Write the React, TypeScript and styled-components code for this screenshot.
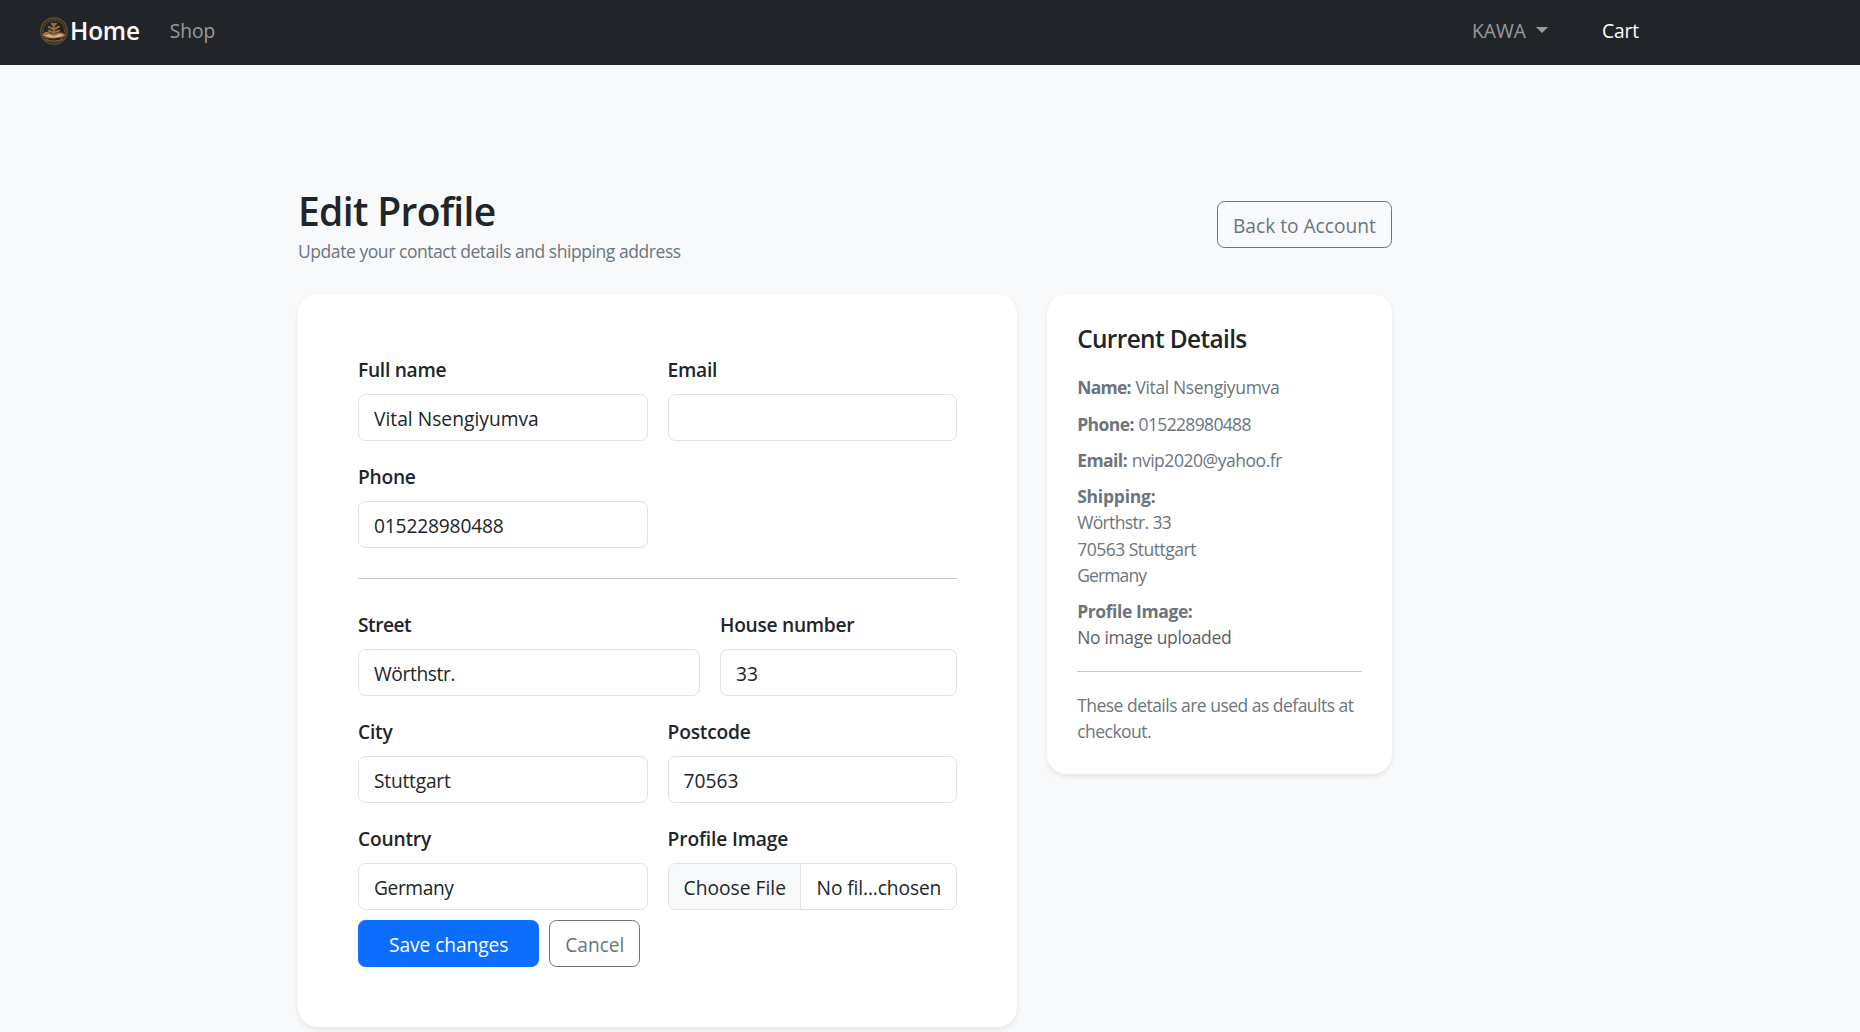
import React from "react";
import styled, { createGlobalStyle } from "styled-components";

const GlobalStyle = createGlobalStyle`
  *, *::before, *::after { box-sizing: border-box; }
  html, body { margin: 0; height: 1032px; overflow: hidden; }
  body {
    background: #f8f9fb;
    color: #212529;
    font-family: "Open Sans", "Noto Sans", sans-serif;
    font-size: 19.2px;
    line-height: 30px;
  }
`;

type Tracked = { $ls?: number };

const Navbar = styled.nav`
  display: flex;
  align-items: center;
  height: 65px;
  padding: 0 221px 3px 40px;
  background: #212529;
`;

const Brand = styled.a`
  display: flex;
  align-items: center;
  gap: 2px;
  color: #fff;
  font-size: 24.4px;
  font-weight: 600;
  letter-spacing: -0.2px;
`;

const NavLink = styled.a<Tracked & { $active?: boolean }>`
  display: flex;
  align-items: center;
  color: ${(p) => (p.$active ? "#fff" : "rgba(255, 255, 255, 0.55)")};
  letter-spacing: ${(p) => p.$ls ?? 0}px;
`;

const NavStart = styled.div`
  margin-left: 30px;
`;

const NavEnd = styled.div`
  display: flex;
  gap: 54px;
  margin-left: auto;
`;

const Caret = styled.span`
  margin-left: 10px;
  margin-top: -2px;
  border-top: 6px solid currentColor;
  border-left: 6px solid transparent;
  border-right: 6px solid transparent;
`;

const Page = styled.main`
  width: 1093.75px;
  margin: 121.5px 0 0 298px;
`;

const PageHeader = styled.header`
  display: flex;
  align-items: center;
  justify-content: space-between;
  margin-bottom: 31.25px;
`;

const Title = styled.h1`
  margin: 0 0 3px;
  font-size: 39px;
  font-weight: 600;
  line-height: 47px;
  letter-spacing: -0.65px;
`;

const Subtitle = styled.p`
  margin: 0;
  padding-top: 1px;
  margin-bottom: -1px;
  color: #6c757d;
  font-size: 17.5px;
  line-height: 26.25px;
  letter-spacing: -0.44px;
`;

const Button = styled.button<Tracked & { $primary?: boolean }>`
  height: 47px;
  padding: 2px ${(p) => (p.$primary ? 30 : 15)}px 0;
  border: 1px solid ${(p) => (p.$primary ? "#0d6efd" : "#6c757d")};
  border-radius: 7.5px;
  background: ${(p) => (p.$primary ? "#0d6efd" : "transparent")};
  color: ${(p) => (p.$primary ? "#fff" : "#6c757d")};
  font: inherit;
  white-space: nowrap;
  letter-spacing: ${(p) => p.$ls ?? 0}px;
`;

const Columns = styled.div`
  display: grid;
  grid-template-columns: 719.17px 344.58px;
  gap: 30px;
  align-items: start;
`;

const Card = styled.section<{ $pad: string }>`
  padding: ${(p) => p.$pad};
  border-radius: 20px;
  background: #fff;
  box-shadow: 0 2.5px 5px rgba(0, 0, 0, 0.075);
`;

const FieldRow = styled.div<{ $cols?: string }>`
  display: grid;
  grid-template-columns: ${(p) => p.$cols ?? "1fr 1fr"};
  gap: 20px;
  & + & { margin-top: 20px; }
`;

const Field = styled.div`
  min-width: 0;
`;

const Label = styled.label<Tracked>`
  display: block;
  padding-top: 1px;
  margin-bottom: 9px;
  font-weight: 600;
  letter-spacing: ${(p) => p.$ls ?? 0}px;
`;

const Input = styled.input<Tracked>`
  display: block;
  width: 100%;
  height: 47px;
  padding: 1px 15px 0;
  border: 1px solid #dee2e6;
  border-radius: 7.5px;
  background: #fff;
  color: #212529;
  font: inherit;
  letter-spacing: ${(p) => p.$ls ?? 0}px;
`;

const FilePicker = styled.div`
  display: flex;
  height: 47px;
  overflow: hidden;
  border: 1px solid #dee2e6;
  border-radius: 7.5px;
  line-height: 47px;
  white-space: nowrap;
`;

const FileButton = styled.span`
  width: 132px;
  padding-left: 15px;
  border-right: 1px solid #dee2e6;
  background: #f8f9fb;
  letter-spacing: 0.02px;
`;

const FileName = styled.span`
  padding-left: 16px;
  letter-spacing: -0.12px;
`;

const Divider = styled.hr<{ $above: number; $below: number }>`
  height: 1px;
  margin: ${(p) => p.$above}px 0 ${(p) => p.$below}px;
  border: 0;
  background: #c7c8ca;
`;

const Actions = styled.div`
  display: flex;
  gap: 10px;
  margin-top: 10px;
`;

const CardTitle = styled.h2`
  margin: 0 0 20.4px;
  font-size: 24.4px;
  font-weight: 600;
  line-height: 30px;
  letter-spacing: -0.62px;
`;

const Detail = styled.div`
  margin-bottom: 10px;
  color: #6c757d;
  font-size: 17.5px;
  line-height: 26.25px;
  white-space: nowrap;
`;

const Term = styled.strong<Tracked>`
  font-weight: 700;
  letter-spacing: ${(p) => p.$ls ?? 0}px;
`;

const Line = styled.div<Tracked & { $dark?: boolean }>`
  color: ${(p) => (p.$dark ? "rgba(33, 37, 41, 0.75)" : "inherit")};
  letter-spacing: ${(p) => p.$ls ?? 0}px;
`;

const Value = styled.span<Tracked>`
  letter-spacing: ${(p) => p.$ls ?? 0}px;
`;

const Note = styled.div`
  color: #6c757d;
  font-size: 17.5px;
  line-height: 26.25px;
  letter-spacing: -0.52px;
`;

const Logo = () => (
  <svg width="28" height="28" viewBox="0 0 27 27" fill="none">
    <circle cx="13.5" cy="13.5" r="12.7" stroke="#76512d" strokeWidth="1.1" />
    <circle cx="13.5" cy="13.5" r="10.6" stroke="#65482b" strokeWidth="1.8" strokeDasharray="1.4 0.9" />
    <path
      d="M13.3 17V6.500M13.3 8.600l-2-2.200M13.3 8.600l2.100-2.200M13.3 12L8.400 9.600M13.3 12l5-2.600M13.3 15l-5-1.800M13.3 15l5.200-1.800"
      stroke="#9c6c3b"
      strokeWidth="1.900"
      strokeLinecap="round"
    />
    <path
      d="M2.200 17.400c.6-2 2.600-3 5-3.200l3.300 1.500 2.800 1.200 4-1.700c3-.7 5.800.2 7.400 2.200-2 2-4.600 2.700-8 2.800-5 1.100-11.500.7-14.500-2.800Z"
      fill="#a8713f"
    />
    <path d="M4 17.800l4.500-.9 4.500 1.600 5.800-2 4.200 1-5.200 1.700-6.500.6Z" fill="#d9b98f" />
    <path d="M5 21.600c4.500 2.200 12.500 2.200 17 0" stroke="#7d5832" strokeWidth="1.300" />
  </svg>
);

type TextFieldProps = { label: string; value: string; ls?: number; valueLs?: number };

const TextField = ({ label, value, ls, valueLs }: TextFieldProps) => (
  <Field>
    <Label $ls={ls}>{label}</Label>
    <Input $ls={valueLs} defaultValue={value} />
  </Field>
);

export default function App() {
  return (
    <>
      <GlobalStyle />
      <Navbar>
        <Brand>
          <Logo />
          Home
        </Brand>
        <NavStart>
          <NavLink $ls={-0.04}>Shop</NavLink>
        </NavStart>
        <NavEnd>
          <NavLink $ls={0.05}>
            KAWA
            <Caret />
          </NavLink>
          <NavLink $active $ls={-0.1}>Cart</NavLink>
        </NavEnd>
      </Navbar>
      <Page>
        <PageHeader>
          <div>
            <Title>Edit Profile</Title>
            <Subtitle>Update your contact details and shipping address</Subtitle>
          </div>
          <Button $ls={-0.02}>Back to Account</Button>
        </PageHeader>
        <Columns>
          <Card $pad="60px">
            <FieldRow>
              <TextField label="Full name" value="Vital Nsengiyumva" ls={-0.28} valueLs={0.02} />
              <TextField label="Email" value="" ls={-0.25} />
            </FieldRow>
            <FieldRow>
              <TextField label="Phone" value="015228980488" ls={-0.27} valueLs={-0.17} />
            </FieldRow>
            <Divider $above={30} $below={30} />
            <FieldRow $cols="342px 1fr">
              <TextField label="Street" value="Wörthstr." ls={-0.5} valueLs={-0.38} />
              <TextField label="House number" value="33" ls={-0.28} />
            </FieldRow>
            <FieldRow>
              <TextField label="City" value="Stuttgart" ls={-0.2} valueLs={-0.22} />
              <TextField label="Postcode" value="70563" ls={-0.22} valueLs={0.03} />
            </FieldRow>
            <FieldRow>
              <TextField label="Country" value="Germany" ls={-0.2} valueLs={-0.42} />
              <Field>
                <Label $ls={-0.14}>Profile Image</Label>
                <FilePicker>
                  <FileButton>Choose File</FileButton>
                  <FileName>No fil...chosen</FileName>
                </FilePicker>
              </Field>
            </FieldRow>
            <Actions>
              <Button $primary $ls={-0.08}>Save changes</Button>
              <Button $ls={-0.05}>Cancel</Button>
            </Actions>
          </Card>
          <Card $pad="30.1px 30px 29.6px">
            <CardTitle>Current Details</CardTitle>
            <Detail>
              <Term $ls={-0.72}>Name:</Term> <Value $ls={-0.36}>Vital Nsengiyumva</Value>
            </Detail>
            <Detail>
              <Term $ls={-0.55}>Phone:</Term> <Value $ls={-0.65}>015228980488</Value>
            </Detail>
            <Detail>
              <Term $ls={-0.55}>Email:</Term> <Value $ls={-0.47}>nvip2020@yahoo.fr</Value>
            </Detail>
            <Detail>
              <Term $ls={-0.23}>Shipping:</Term>
              <Line $ls={-0.64}>Wörthstr. 33</Line>
              <Line $ls={-0.5}>70563 Stuttgart</Line>
              <Line $ls={-0.87}>Germany</Line>
            </Detail>
            <Detail>
              <Term $ls={-0.4}>Profile Image:</Term>
              <Line $dark $ls={-0.33}>No image uploaded</Line>
            </Detail>
            <Divider $above={20} $below={19.9} />
            <Note>These details are used as defaults at checkout.</Note>
          </Card>
        </Columns>
      </Page>
    </>
  );
}
